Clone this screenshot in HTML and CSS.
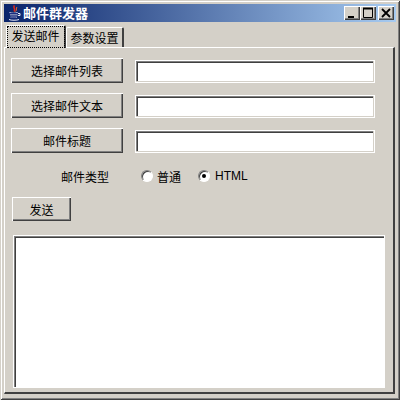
FILE: index.html
```html
<!DOCTYPE html>
<html lang="zh">
<head>
<meta charset="utf-8">
<title>邮件群发器</title>
<link rel="stylesheet" href="styles.css">
</head>
<body>
<div class="window">
  <div class="titlebar">
    <svg class="app-icon" width="16" height="16" viewBox="0 0 16 16">
      <path d="M8.500 0.500C6.500 2.500 10 3.500 8 6.500" fill="none" stroke="#e02818" stroke-width="1.500"/>
      <path d="M11 2C9.500 3.500 11.500 4.500 9.500 6.500" fill="none" stroke="#e86a30" stroke-width="1"/>
      <path d="M3.500 7.500c1 1 7 1 8 0M4 10h7.500M4.500 12h6.500M3 14.500c2 1 8 1 10 0" fill="none" stroke="#e8e8f8" stroke-width="1"/>
      <path d="M3 8.500h9M4 11h7M5 13h5" fill="none" stroke="#1c2c80" stroke-width="1"/>
      <path d="M12 8.500h2v2h-2" fill="none" stroke="#e8e8f8"/>
    </svg>
    <span class="title-text">邮件群发器</span>
    <div class="controls">
      <div class="ctl"><svg width="16" height="14" viewBox="0 0 16 14"><path d="M4 10h6v2H4z" fill="#000"/></svg></div>
      <div class="ctl"><svg width="16" height="14" viewBox="0 0 16 14"><path d="M3.500 2.500h9v9h-9z" fill="none" stroke="#000"/><path d="M3 2.500h10" stroke="#000" stroke-width="2"/></svg></div>
      <div class="ctl ctl-close"><svg width="16" height="14" viewBox="0 0 16 14"><path d="M4 3l8 8M12 3l-8 8" stroke="#000" stroke-width="1.800"/></svg></div>
    </div>
  </div>
  <div class="tabs">
    <div class="tab tab-active"><span class="tab-focus">发送邮件</span></div>
    <div class="tab">参数设置</div>
  </div>
  <div class="panel">
    <div class="row">
      <button class="btn btn-wide">选择邮件列表</button>
      <div class="input"></div>
    </div>
    <div class="row">
      <button class="btn btn-wide">选择邮件文本</button>
      <div class="input"></div>
    </div>
    <div class="row">
      <button class="btn btn-wide">邮件标题</button>
      <div class="input"></div>
    </div>
    <div class="type-row">
      <span class="type-label">邮件类型</span>
      <span class="radio"></span><span class="radio-text">普通</span>
      <span class="radio radio-on"></span><span class="radio-text latin">HTML</span>
    </div>
    <button class="btn btn-send">发送</button>
    <div class="log"></div>
  </div>
</div>
</body>
</html>
```
FILE: styles.css
```css
* { box-sizing: border-box; }
html, body { margin: 0; padding: 0; }
body {
  width: 400px;
  height: 400px;
  overflow: hidden;
  font-family: "Noto Sans CJK SC", "Liberation Sans", sans-serif;
  font-size: 12px;
  color: #000;
}
.window {
  width: 400px;
  height: 400px;
  padding: 4px;
  display: flex;
  flex-direction: column;
  background: #d4d0c8;
  box-shadow: inset 1px 1px 0 #d4d0c8, inset -1px -1px 0 #404040, inset 2px 2px 0 #fff, inset -2px -2px 0 #808080;
}
.titlebar {
  height: 18px;
  flex: none;
  display: flex;
  align-items: center;
  background: linear-gradient(90deg, #0a246a, #a6caf0);
  color: #fff;
  font-weight: 700;
  padding: 0 2px;
}
.app-icon { flex: none; }
.title-text { margin-left: 1px; font-size: 13px; line-height: 18px; }
.controls { margin-left: auto; display: flex; }
.ctl {
  width: 16px;
  height: 14px;
  background: #d4d0c8;
  box-shadow: inset 1px 1px 0 #fff, inset -1px -1px 0 #404040, inset -2px -2px 0 #808080;
  display: flex;
}
.ctl-close { margin-left: 2px; }
.tabs {
  flex: none;
  height: 25px;
  padding: 3px 0 0 2px;
  display: flex;
  align-items: flex-end;
  position: relative;
  z-index: 1;
}
.tab {
  height: 20px;
  width: 58px;
  display: flex;
  align-items: center;
  justify-content: center;
  border-top: 1px solid #fff;
  border-left: 1px solid #fff;
  border-right: 2px solid #404040;
  border-radius: 2px 2px 0 0;
}
.tab-active {
  height: 23px;
  width: 60px;
  margin-bottom: -1px;
  background: #d4d0c8;
}
.tab-focus {
  outline: 1px dotted #000;
  height: 20px;
  width: 56px;
  line-height: 18px;
  text-align: center;
}
.panel {
  flex: 1;
  min-height: 0;
  padding: 10px 6px 0 6px;
  border-top: 1px solid #fff;
  border-left: 1px solid #fff;
  border-right: 2px solid #404040;
  border-bottom: 2px solid #404040;
  margin: 0 1px 2px 0;
  display: flex;
  flex-direction: column;
}
.row {
  height: 25px;
  margin-bottom: 10px;
  display: flex;
  align-items: center;
}
.btn {
  font: inherit;
  color: #000;
  padding: 0;
  border: 0;
  background: #d4d0c8;
  box-shadow: inset 1px 1px 0 #fff, inset -1px -1px 0 #404040, inset -2px -2px 0 #808080;
}
.btn-wide { width: 112px; height: 25px; flex: none; }
.input {
  width: 238px;
  height: 21px;
  margin: 1px 0 0 13px;
  background: #fff;
  box-shadow: inset 1px 1px 0 #808080, inset 2px 2px 0 #404040;
  border-right: 1px solid #d4d0c8;
  border-bottom: 1px solid #d4d0c8;
  outline: 1px solid #fff;
}
.type-row {
  height: 25px;
  padding-top: 1px;
  display: flex;
  align-items: center;
}
.type-label { margin-left: 50px; width: 80px; }
.radio {
  width: 12px;
  height: 12px;
  border-radius: 50%;
  background: #fff;
  border: 1px solid;
  border-color: #808080 #fff #fff #808080;
  box-shadow: inset 1px 1px 0 #404040;
  flex: none;
  display: flex;
  align-items: center;
  justify-content: center;
}
.radio-on::after {
  content: "";
  width: 4px;
  height: 4px;
  border-radius: 50%;
  background: #000;
}
.radio-text { margin-left: 4px; width: 41px; }
.radio-text.latin { font-family: "Liberation Sans", sans-serif; margin-left: 5px; }
.btn-send {
  width: 59px;
  height: 24px;
  margin: 9px 0 0 1px;
  flex: none;
}
.log {
  width: 370px;
  height: 151px;
  margin: 15px 0 0 3px;
  background: #fff;
  box-shadow: inset 1px 1px 0 #808080, inset 2px 2px 0 #404040;
  outline: 1px solid #fff;
  flex: none;
}
```
